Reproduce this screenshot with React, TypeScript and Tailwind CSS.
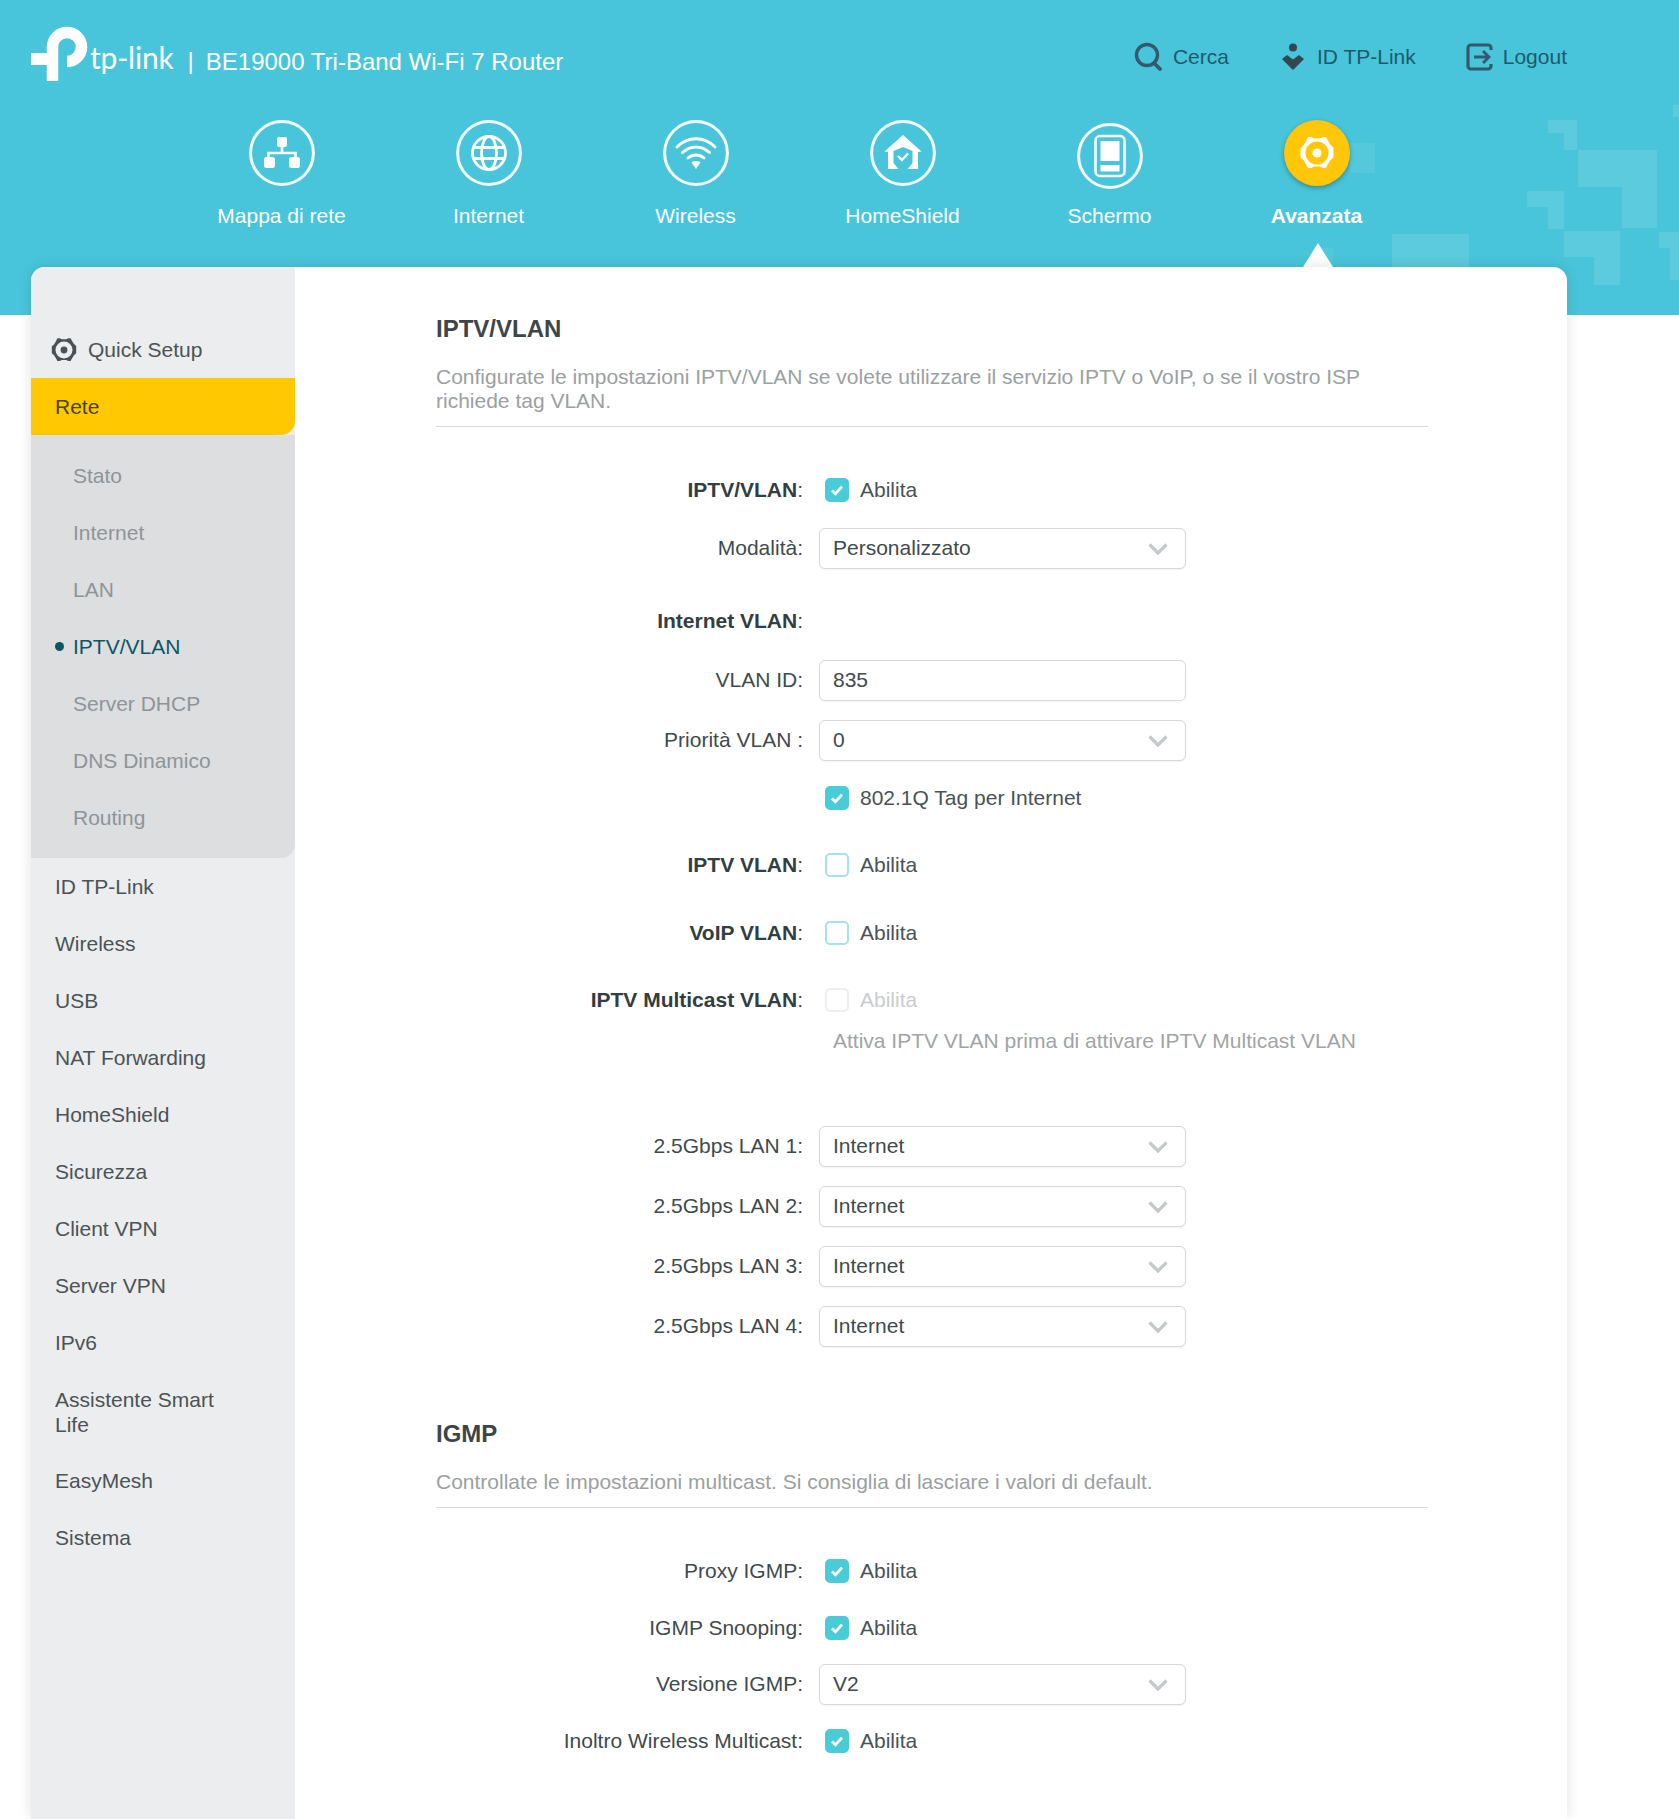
import React from "react";

const Ring = ({ children, className = "" }: { children: React.ReactNode; className?: string }) => (
  <svg viewBox="0 0 66 66" className={`w-[66px] h-[66px] ${className}`}>
    <circle cx="33" cy="33" r="31.4" fill="none" stroke="#fff" strokeWidth="3" opacity="0.95" />
    {children}
  </svg>
);

const NetIcon = () => (
  <Ring>
    <rect x="28" y="17" width="10" height="10" rx="2" fill="#fff" />
    <path d="M33 26v7M19.500 38v-5h27v5" fill="none" stroke="#fff" strokeWidth="2.600" />
    <rect x="15" y="37" width="11" height="11" rx="2.500" fill="#fff" />
    <rect x="40" y="37" width="11" height="11" rx="2.500" fill="#fff" />
  </Ring>
);
const GlobeIcon = () => (
  <Ring>
    <g fill="none" stroke="#fff" strokeWidth="2.800">
      <circle cx="33" cy="33" r="16.500" />
      <ellipse cx="33" cy="33" rx="7.500" ry="16.500" />
      <path d="M17.500 27.500h31M17.500 38.500h31" />
    </g>
  </Ring>
);
const WifiIcon = () => (
  <Ring>
    <g fill="none" stroke="#fff" strokeWidth="3" strokeLinecap="round">
      <path d="M14 27c11-11 27-11 38 0" />
      <path d="M19.500 32.500c8-7.500 19-7.500 27 0" />
      <path d="M25 38c4.500-4 11.500-4 16 0" />
    </g>
    <path d="M28.500 42.500c2-2 7-2 9 0L33 49z" fill="#fff" />
  </Ring>
);
const HomeIcon = () => (
  <Ring>
    <path d="M33 15 14.500 31.500l3.500 .5v17h10.500L23.500 43V31l9.500-4 9.500 4v12L37.500 49H48V32l3.500-.5z" fill="#fff" />
    <path d="M28 36l4 4 6-6.500" fill="none" stroke="#fff" strokeWidth="2.400" />
  </Ring>
);
const ScreenIcon = () => (
  <Ring className="mt-[3px] -mb-[3px]">
    <rect x="18.500" y="13" width="29" height="40" rx="4.500" fill="none" stroke="#fff" strokeWidth="2.600" />
    <rect x="23.500" y="18" width="19" height="20" fill="#fff" />
    <rect x="23.500" y="42" width="19" height="6.500" fill="#fff" />
  </Ring>
);

const GearShape = ({ color }: { color: string }) => (
  <>
    <path
      fillRule="evenodd"
      d="M24 17h3l3 1.500h6l3-1.500h3l1.500 3 3 5 3 2.500v10l-3 2.500-3 5-1.500 3h-3l-3-1.500h-6l-3 1.500h-3l-1.500-3-3-5-3-2.500V28l3-2.500 3-5zM33 21.500a11.500 11.500 0 1 0 0 23 11.500 11.500 0 0 0 0-23z"
      fill={color}
    />
    <circle cx="33" cy="33" r="4.600" fill={color} />
  </>
);

const NavItem = ({ icon, label, active }: { icon: React.ReactNode; label: string; active?: boolean }) => (
  <div className="w-[207px] flex flex-col items-center">
    {icon}
    <div className={`mt-[18px] h-[24px] leading-[24px] text-[21px] text-white ${active ? "font-bold" : ""}`}>{label}</div>
  </div>
);

const Pattern = () => (
  <svg viewBox="0 0 1679 315" className="absolute left-0 top-0 w-[1679px] h-[315px] pointer-events-none">
    <g fill="#fff" opacity="0.1">
      <path d="M1548 120h29v30h-13v-17h-16z" />
      <path d="M1578 150h79v78h-35v-41h-44z" />
      <path d="M1527 191h37v38h-16v-22h-21z" />
      <path d="M1564 231h56v54h-26v-28h-30z" />
      <rect x="1392" y="234" width="77" height="33" />
      <path d="M1659 232h20v48h-9v-32h-11z" />
      <rect x="1350" y="143" width="25" height="30" fillOpacity="0.7" />
      <rect x="1673" y="105" width="6" height="12" />
      <rect x="1320" y="248" width="13" height="19" fillOpacity="0.5" />
    </g>
  </svg>
);

const Logo = () => (
  <svg viewBox="0 0 60 60" className="w-[60px] h-[60px]">
    <path d="M22.500 56V22A14.500 14.500 0 1 1 37 36.500" fill="none" stroke="#fff" strokeWidth="11.500" />
    <path d="M1 28h22v12H1z" fill="#fff" />
  </svg>
);

const Header = () => (
  <header className="relative h-[315px] bg-[#48c5da]">
    <Pattern />
    <div className="relative flex items-start h-[120px]">
      <div className="flex items-center pl-[30px] pt-[25px]">
        <Logo />
        <span className="mt-[4px] font-['Lato',sans-serif] text-[30px] leading-[40px] text-white tracking-[-0.2px]">tp-link</span>
        <span className="ml-[14px] mt-[12px] text-[24px] leading-[30px] text-white">|</span>
        <span className="ml-[12px] mt-[13px] text-[24px] leading-[30px] text-white">BE19000 Tri-Band Wi-Fi 7 Router</span>
      </div>
      <div className="ml-auto mr-[112px] mt-[42px] flex items-center text-[21px] leading-[30px] text-[#1f5a6c]">
        <svg viewBox="0 0 28 30" className="w-[28px] h-[30px]">
          <circle cx="13" cy="13" r="10.500" fill="none" stroke="#33596a" strokeWidth="3.400" />
          <path d="M20 21l6 6" stroke="#33596a" strokeWidth="3.800" strokeLinecap="round" />
        </svg>
        <span className="ml-[11px]">Cerca</span>
        <svg viewBox="0 0 24 30" className="ml-[52px] w-[24px] h-[30px]">
          <circle cx="12" cy="5.500" r="4" fill="#33474f" />
          <path d="M1 17l5-4 6 4.500 6-4.500 5 4-11 11z" fill="#33474f" />
        </svg>
        <span className="ml-[12px]">ID TP-Link</span>
        <svg viewBox="0 0 28 30" className="ml-[50px] w-[28px] h-[30px]">
          <path d="M25 8V6a3 3 0 0 0-3-3H5a3 3 0 0 0-3 3v18a3 3 0 0 0 3 3h17a3 3 0 0 0 3-3v-2" fill="none" stroke="#33596a" strokeWidth="3.200" />
          <path d="M8 15h15M17 9l6 6-6 6" fill="none" stroke="#33596a" strokeWidth="2.800" />
        </svg>
        <span className="ml-[9px]">Logout</span>
      </div>
    </div>
    <nav className="relative flex pl-[178px]">
      <NavItem icon={<NetIcon />} label="Mappa di rete" />
      <NavItem icon={<GlobeIcon />} label="Internet" />
      <NavItem icon={<WifiIcon />} label="Wireless" />
      <NavItem icon={<HomeIcon />} label="HomeShield" />
      <NavItem icon={<ScreenIcon />} label="Schermo" />
      <NavItem
        active
        label="Avanzata"
        icon={
          <svg viewBox="0 0 66 66" className="w-[66px] h-[66px] rounded-full bg-[#ffc60a] shadow-[0_2px_5px_rgba(0,0,0,0.3)]">
            <GearShape color="#fff" />
          </svg>
        }
      />
    </nav>
    <svg viewBox="0 0 30 24" className="absolute left-[1303px] top-[243px] w-[30px] h-[24px]">
      <path d="M15 0l15 24H0z" fill="#fff" />
    </svg>
  </header>
);

const subItems = ["Stato", "Internet", "LAN", "IPTV/VLAN", "Server DHCP", "DNS Dinamico", "Routing"];
const mainItems = ["ID TP-Link", "Wireless", "USB", "NAT Forwarding", "HomeShield", "Sicurezza", "Client VPN", "Server VPN", "IPv6", "Assistente Smart Life", "EasyMesh", "Sistema"];

const Sidebar = () => (
  <aside className="w-[264px] shrink-0 bg-[#ebedee] pt-[54px] rounded-tl-[14px] text-[21px] leading-[24px] text-[#4c5356]">
    <div className="h-[57px] flex items-center pl-[16px]">
      <svg viewBox="10 10 46 46" className="w-[34px] h-[34px] mr-[7px]">
        <GearShape color="#4a5054" />
      </svg>
      <span>Quick Setup</span>
    </div>
    <div className="h-[57px] flex items-center pl-[24px] bg-[#ffc800] rounded-br-[14px] text-[#4a4420]">Rete</div>
    <div className="bg-[#dcdee0] rounded-br-[14px] pt-[12px] pb-[12px]">
      {subItems.map((s) => (
        <div key={s} className={`h-[57px] flex items-center pl-[42px] relative ${s === "IPTV/VLAN" ? "text-[#0f5566]" : "text-[#8f9497]"}`}>
          {s === "IPTV/VLAN" && <span className="absolute left-[24px] top-[24px] w-[9px] h-[9px] rounded-full bg-[#0f5566]" />}
          {s}
        </div>
      ))}
    </div>
    <div className="pt-[1px]">
      {mainItems.map((s) => (
        <div key={s} className="min-h-[57px] flex items-center pl-[24px] pr-[50px] py-[16px] leading-[24.5px]">{s}</div>
      ))}
    </div>
  </aside>
);

const Check = ({ checked, disabled }: { checked?: boolean; disabled?: boolean }) => (
  <span className={`w-[24px] h-[24px] rounded-[5px] flex items-center justify-center border-2 ${checked ? "bg-[#4acbd8] border-[#4acbd8]" : disabled ? "bg-white border-[#eeeeee]" : "bg-white border-[#a6e2ea]"}`}>
    {checked && (
      <svg viewBox="0 0 24 24" className="w-[20px] h-[20px]">
        <path d="M6 12.500l4.200 4L18 8" fill="none" stroke="#fff" strokeWidth="3.400" />
      </svg>
    )}
  </span>
);

const CheckField = ({ checked, disabled, text = "Abilita" }: { checked?: boolean; disabled?: boolean; text?: string }) => (
  <div className={`ml-[6px] flex items-center ${disabled ? "text-[#c9cccd]" : "text-[#4a5256]"}`}>
    <Check checked={checked} disabled={disabled} />
    <span className="ml-[11px]">{text}</span>
  </div>
);

const Box = ({ value, chevron = true }: { value: string; chevron?: boolean }) => (
  <div className="w-[367px] h-[41px] border border-[#d6d8d9] rounded-[6px] bg-white flex items-center pl-[13px] pr-[17px] text-[#3f4a4e] shadow-[0_1px_2px_rgba(0,0,0,0.05)]">
    <span className="flex-1">{value}</span>
    {chevron && (
      <svg viewBox="0 0 20 12" className="w-[20px] h-[12px] mt-[2px]">
        <path d="M1.500 1.500 10 10l8.500-8.500" fill="none" stroke="#c6c8c9" strokeWidth="3.200" />
      </svg>
    )}
  </div>
);

const Row = ({ label, bold, className = "", children }: { label?: string; bold?: boolean; className?: string; children?: React.ReactNode }) => (
  <div className={`h-[40px] flex items-center ${className}`}>
    <div className="w-[367px] mr-[16px] text-right text-[#3f4a4e] whitespace-pre">
      {label && (bold ? <span className="font-bold text-[#333e42]">{label}</span> : label)}
      {label && ":"}
    </div>
    {children}
  </div>
);

const Section = ({ title, desc, className = "" }: { title: string; desc: React.ReactNode; className?: string }) => (
  <div className={className}>
    <h2 className="text-[24px] leading-[30px] font-bold text-[#3c4649]">{title}</h2>
    <p className="mt-[21px] pb-[13px] border-b border-[#d9dbdc] text-[#9ba0a2]">{desc}</p>
  </div>
);

const Form = () => (
  <main className="flex-1 pl-[141px] pr-[139px] pt-[47px] text-[21px] leading-[24px]">
    <Section
      title="IPTV/VLAN"
      desc={<>Configurate le impostazioni IPTV/VLAN se volete utilizzare il servizio IPTV o VoIP, o se il vostro ISP<br />richiede tag VLAN.</>}
    />
    <Row label="IPTV/VLAN" bold className="mt-[43px]"><CheckField checked /></Row>
    <Row label="Modalità" className="mt-[18px]"><Box value="Personalizzato" /></Row>
    <Row label="Internet VLAN" bold className="mt-[33px]" />
    <Row label="VLAN ID" className="mt-[19px]"><Box value="835" chevron={false} /></Row>
    <Row label="Priorità VLAN " className="mt-[20px]"><Box value="0" /></Row>
    <Row className="mt-[18px]"><CheckField checked text="802.1Q Tag per Internet" /></Row>
    <Row label="IPTV VLAN" bold className="mt-[27px]"><CheckField /></Row>
    <Row label="VoIP VLAN" bold className="mt-[28px]"><CheckField /></Row>
    <Row label="IPTV Multicast VLAN" bold className="mt-[27px]"><CheckField disabled /></Row>
    <div className="mt-[9px] pl-[397px] text-[#a0a4a6]">Attiva IPTV VLAN prima di attivare IPTV Multicast VLAN</div>
    <Row label="2.5Gbps LAN 1" className="mt-[73px]"><Box value="Internet" /></Row>
    <Row label="2.5Gbps LAN 2" className="mt-[20px]"><Box value="Internet" /></Row>
    <Row label="2.5Gbps LAN 3" className="mt-[20px]"><Box value="Internet" /></Row>
    <Row label="2.5Gbps LAN 4" className="mt-[20px]"><Box value="Internet" /></Row>
    <Section className="mt-[73px]" title="IGMP" desc="Controllate le impostazioni multicast. Si consiglia di lasciare i valori di default." />
    <Row label="Proxy IGMP" className="mt-[43px]"><CheckField checked /></Row>
    <Row label="IGMP Snooping" className="mt-[17px]"><CheckField checked /></Row>
    <Row label="Versione IGMP" className="mt-[16px]"><Box value="V2" /></Row>
    <Row label="Inoltro Wireless Multicast" className="mt-[17px]"><CheckField checked /></Row>
  </main>
);

export default function App() {
  return (
    <div className="h-[1819px] overflow-hidden bg-white font-['Liberation_Sans',Arial,sans-serif]">
      <Header />
      <div className="relative -mt-[48px] ml-[31px] w-[1536px] h-[1552px] flex bg-white rounded-t-[14px] shadow-[0_0_14px_rgba(0,0,0,0.12)]">
        <Sidebar />
        <Form />
      </div>
    </div>
  );
}
